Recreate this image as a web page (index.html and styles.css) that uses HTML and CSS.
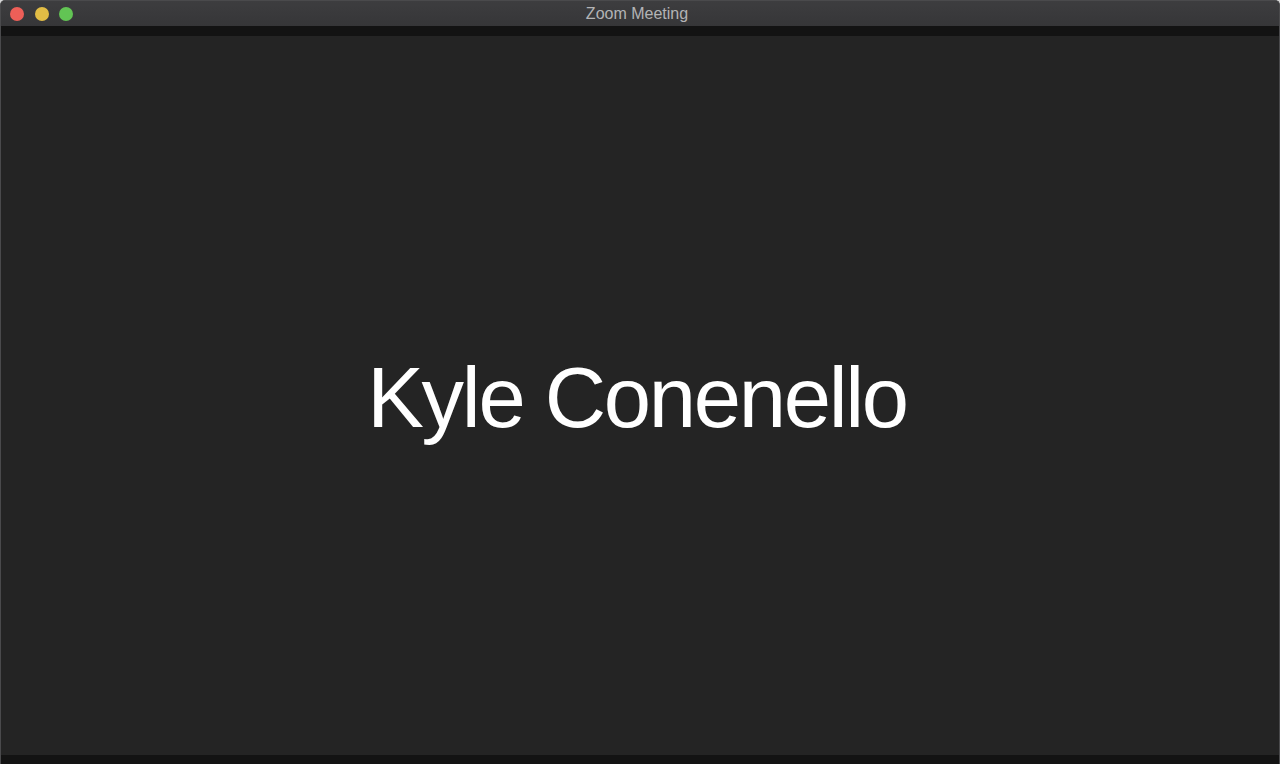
FILE: index.html
```html
<!DOCTYPE html>
<html lang="en">
<head>
    <meta charset="UTF-8">
    <meta name="viewport" content="width=device-width, initial-scale=1.0">
    <title>Zoom Meeting</title>
    <link rel="stylesheet" href="styles.css">
</head>
<body>
    <div class="window">
        <div class="titlebar">
            <div class="lights">
                <span class="light red"></span>
                <span class="light yellow"></span>
                <span class="light green"></span>
            </div>
            <div class="title">Zoom Meeting</div>
        </div>
        <div class="topstrip"></div>
        <div class="stage">
            <div class="name">Kyle Conenello</div>
        </div>
        <div class="bottomstrip"></div>
    </div>
</body>
</html>
```

FILE: styles.css
```css
html, body {
    margin: 0;
    height: 100%;
    background-color: #d8d8d8;
}
body {
    font-family: 'Liberation Sans', Arial, sans-serif;
}
.window {
    height: 764px;
    display: flex;
    flex-direction: column;
    background-color: #242424;
    border-radius: 5px 5px 0 0;
    overflow: hidden;
    box-sizing: border-box;
    border: 1px solid #4a4a4c;
    border-bottom: none;
}
.titlebar {
    height: 25px;
    flex-shrink: 0;
    position: relative;
    display: flex;
    align-items: center;
    justify-content: center;
    background: linear-gradient(#3d3d3f, #363638);
}
.lights {
    position: absolute;
    left: 9px;
    top: 6px;
    display: flex;
    gap: 10.5px;
}
.light {
    width: 14px;
    height: 14px;
    border-radius: 50%;
    display: block;
}
.red { background-color: #ee5f58; }
.yellow { background-color: #e2bd45; }
.green { background-color: #62c454; }
.title {
    color: #b3b3b5;
    font-size: 16px;
    margin-right: 6px;
}
.topstrip {
    height: 10px;
    flex-shrink: 0;
    background-color: #131313;
}
.stage {
    flex: 1;
    display: flex;
    align-items: center;
    justify-content: center;
    background-color: #242424;
}
.name {
    color: #fff;
    font-size: 85px;
    letter-spacing: -2.3px;
    margin-right: 6px;
    margin-top: 4px;
}
.bottomstrip {
    height: 9px;
    flex-shrink: 0;
    background-color: #131313;
}
```
